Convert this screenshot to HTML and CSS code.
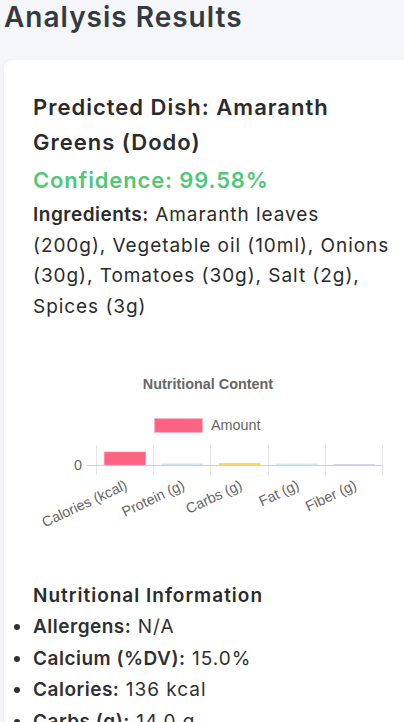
FILE: index.html
```html
<!DOCTYPE html>
<html lang="en">
<head>
<meta charset="utf-8">
<title>Analysis Results</title>
<link rel="stylesheet" href="styles.css">
</head>
<body>
<div class="page">
  <h2 class="page-title">Analysis Results</h2>
  <section class="card">
    <h3 class="dish">Predicted Dish: Amaranth Greens (Dodo)</h3>
    <p class="confidence">Confidence: 99.58%</p>
    <p class="ingredients"><strong>Ingredients:</strong> Amaranth leaves (200g), Vegetable oil (10ml), Onions (30g), Tomatoes (30g), Salt (2g), Spices (3g)</p>

    <div class="chart">
      <svg class="chart-svg" width="350" height="200" viewBox="33 350 350 200" xmlns="http://www.w3.org/2000/svg">
        <text class="c-title" x="208" y="389" text-anchor="middle">Nutritional Content</text>
        <rect x="154.5" y="418.5" width="48" height="14" fill="#ff6384" stroke="#ffb3c3" stroke-width="1"/>
        <text class="c-text" x="211" y="430">Amount</text>

        <g stroke="#e6e6e6" stroke-width="1">
          <line x1="96.5" y1="445" x2="96.5" y2="475"/>
          <line x1="153.5" y1="445" x2="153.5" y2="475"/>
          <line x1="210.5" y1="445" x2="210.5" y2="475"/>
          <line x1="268.5" y1="445" x2="268.5" y2="475"/>
          <line x1="325.5" y1="445" x2="325.5" y2="475"/>
          <line x1="382.5" y1="445" x2="382.5" y2="475"/>
        </g>
        <rect x="104.3" y="452" width="41.4" height="13" fill="#ff6384" stroke="#ff8aa2" stroke-width="0.6"/>
        <rect x="161.6" y="463.5" width="41.4" height="1.5" fill="#cde5f8"/>
        <rect x="219" y="463" width="41.4" height="2" fill="#ffd468"/>
        <rect x="276.3" y="463.5" width="41.4" height="1.5" fill="#cdeeee"/>
        <rect x="333.6" y="464" width="41.4" height="1" fill="#ddd0f7"/>
        <line x1="87" y1="465.5" x2="383" y2="465.5" stroke="#cfcfcf" stroke-width="1"/>

        <text class="c-text" x="82" y="469.5" text-anchor="end">0</text>

        <text class="c-text" text-anchor="end" dy="0.35em" transform="translate(126,484) rotate(-25)">Calories (kcal)</text>
        <text class="c-text" text-anchor="end" dy="0.35em" transform="translate(183.5,484) rotate(-25)">Protein (g)</text>
        <text class="c-text" text-anchor="end" dy="0.35em" transform="translate(241,484) rotate(-25)">Carbs (g)</text>
        <text class="c-text" text-anchor="end" dy="0.35em" transform="translate(298,484) rotate(-25)">Fat (g)</text>
        <text class="c-text" text-anchor="end" dy="0.35em" transform="translate(355.5,484) rotate(-25)">Fiber (g)</text>
      </svg>
    </div>

    <h4 class="info-title">Nutritional Information</h4>
    <ul class="info-list">
      <li><strong>Allergens:</strong> N/A</li>
      <li><strong>Calcium (%DV):</strong> 15.0%</li>
      <li><strong>Calories:</strong> 136 kcal</li>
      <li><strong>Carbs (g):</strong> 14.0 g</li>
      <li><strong>Fat (g):</strong> 10.0 g</li>
    </ul>
  </section>
</div>
</body>
</html>
```
FILE: styles.css
```css
html, body {
  margin: 0;
  padding: 0;
  overflow: hidden;
}
body {
  background: #f4f6fa;
  font-family: Inter, "Open Sans", sans-serif;
  color: #2f3033;
}
.page {
  width: 408px;
  padding-left: 4px;
}
.page-title {
  margin: 0;
  font-size: 28px;
  line-height: 34px;
  font-weight: 600;
  letter-spacing: 1px;
  color: #353a40;
}
.card {
  margin-top: 26px;
  background: #ffffff;
  border-radius: 9px;
  box-shadow: 0 1px 4px rgba(0, 0, 0, 0.06);
  padding: 30px 15px 20px 29px;
}
.dish {
  margin: 0;
  font-size: 22px;
  line-height: 35px;
  font-weight: 600;
  letter-spacing: 1px;
  color: #2b2b2b;
}
.confidence {
  margin: 4px 0 0 0;
  font-size: 22px;
  line-height: 32px;
  font-weight: 600;
  letter-spacing: 0.85px;
  color: #50c878;
}
.ingredients {
  margin: 4px 0 0 0;
  font-size: 19px;
  line-height: 30.6px;
  letter-spacing: 0.95px;
  color: #2b2b2b;
}
.ingredients strong,
.info-list strong {
  font-weight: 600;
  letter-spacing: 0.5px;
}
.chart {
  margin-top: 28px;
  height: 200px;
}
.chart-svg {
  display: block;
}
.c-title {
  font-family: "Liberation Sans", Arial, sans-serif;
  font-size: 14.4px;
  font-weight: bold;
  fill: #666666;
}
.c-text {
  font-family: "Liberation Sans", Arial, sans-serif;
  font-size: 14.4px;
  fill: #666666;
}
.info-title {
  margin: 31px 0 0 0;
  font-size: 19px;
  line-height: 30px;
  font-weight: 600;
  letter-spacing: 1px;
  color: #2b2b2b;
}
.info-list {
  margin: 0;
  padding: 0;
  font-size: 19px;
  line-height: 31.5px;
  letter-spacing: 1px;
}
```
